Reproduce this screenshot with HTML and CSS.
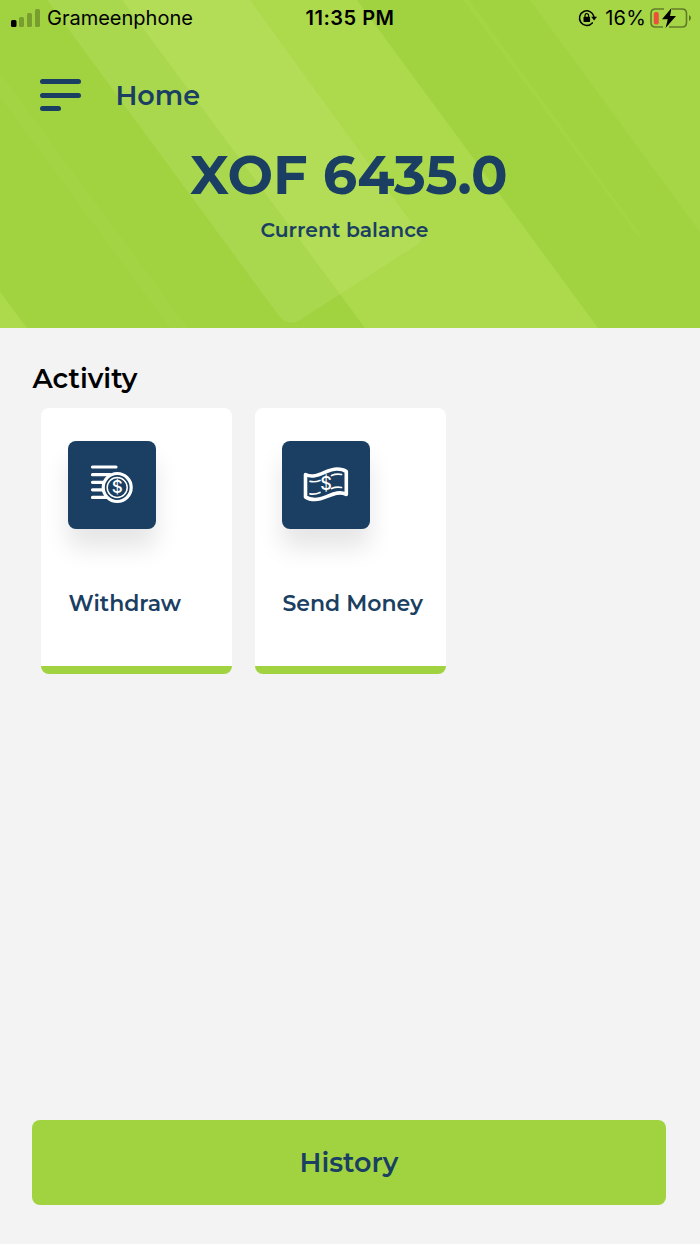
FILE: index.html
```html
<!DOCTYPE html>
<html lang="en">
<head>
    <meta charset="UTF-8">
    <meta name="viewport" content="width=device-width, initial-scale=1.0">
    <title>Home</title>
    <link rel="stylesheet" href="styles.css">
</head>
<body>
    <!-- Header -->
    <header class="header">
        <svg class="header-bg" viewBox="0 0 700 328" preserveAspectRatio="none">
            <path fill="#add94c" d="M122 0H357L598 328H365Z"/>
            <path fill="#add94c" d="M0 292L27 328H0Z"/>
            <path fill="#a6d646" d="M530 0H700V232Z"/>
            <path fill="#a3d443" d="M0 73L188 328H170L0 97Z"/>
            <path fill="#a4d544" d="M463 0H469L641 235L639 237Z"/>
            <path fill="#d8ef9c" fill-opacity=".15" d="M47 0H250L419 233Q424 240 417 245L300 320Q288 327 279 316Z"/>
        </svg>

        <!-- Status Bar -->
        <div class="status-bar">
            <div class="status-left">
                <svg width="30" height="20" viewBox="0 0 30 20">
                    <rect x="0" y="12" width="5.5" height="7" rx="1.5"/>
                    <g fill-opacity=".25">
                        <rect x="8" y="9" width="5" height="10" rx="1.5"/>
                        <rect x="16" y="5" width="5" height="14" rx="1.5"/>
                        <rect x="24" y="1" width="5" height="18" rx="1.5"/>
                    </g>
                </svg>
                <span class="carrier">Grameenphone</span>
            </div>
            <div class="time">11:35 PM</div>
            <div class="status-right">
                <svg class="lock-icon" width="20" height="18" viewBox="0 0 20 18">
                    <path d="M14.300 13.900A7.300 7.300 0 1 1 15.900 7.500" fill="none" stroke="#000" stroke-width="1.500" stroke-linecap="round"/>
                    <path d="M13.200 7.700H19L16.100 11.600Z"/>
                    <rect x="5.500" y="7.800" width="6.600" height="5.200" rx=".8"/>
                    <path d="M7 8.300V6.400a1.800 1.800 0 0 1 3.600 0V8.300" fill="none" stroke="#000" stroke-width="1.200"/>
                </svg>
                <span class="percent">16%</span>
                <svg class="battery" width="42" height="22" viewBox="0 0 42 22">
                    <path d="M14 2H5.500Q1 2 1 6.500V15.500Q1 20 5.500 20H13M22 2H32Q36.500 2 36.500 6.500V15.500Q36.500 20 32 20H19" fill="none" stroke="#000" stroke-opacity=".42" stroke-width="1.600"/>
                    <path d="M39 8Q41 9 41 11T39 14Z" fill-opacity=".45"/>
                    <rect x="3.800" y="5" width="5" height="12.500" rx="2" fill="#ee4f3b"/>
                    <path d="M21.500 1L12 12.300H17.800L15.500 21L26 9H20Z"/>
                </svg>
            </div>
        </div>

        <!-- Nav -->
        <div class="nav">
            <div class="menu-btn">
                <span></span>
                <span></span>
                <span class="short"></span>
            </div>
            <div class="nav-title">Home</div>
        </div>

        <div class="balance">XOF 6435.0</div>
        <div class="balance-label">Current balance</div>
    </header>

    <!-- Activity -->
    <main class="content">
        <h2 class="section-title">Activity</h2>
        <div class="cards">
            <div class="card">
                <div class="card-icon">
                    <svg width="88" height="88" viewBox="0 0 88 88" fill="none" stroke="#fff" stroke-linecap="round">
                        <path stroke-width="3.200" d="M24.500 26H48M24.500 33.700H42M24.500 41.300H36M24.500 48.800H35M24.500 56.400H40"/>
                        <circle cx="49.200" cy="46.500" r="14" fill="#1a3f62" stroke-width="3.200"/>
                        <circle cx="49.200" cy="46.500" r="10" stroke-width="1.500"/>
                        <text class="coin-sign" x="49.200" y="52.400">$</text>
                    </svg>
                </div>
                <div class="card-label">Withdraw</div>
            </div>
            <div class="card">
                <div class="card-icon">
                    <svg width="88" height="88" viewBox="0 0 88 88" fill="none" stroke="#fff" stroke-linecap="round" stroke-linejoin="round">
                        <path stroke-width="3.600" d="M23.500 33.500C34 39 44 28 55 28Q61 28 64.300 30.500V53.500C54 48 44 58.500 33 58.500Q27 58.500 23.500 56Z"/>
                        <path stroke-width="1.700" d="M28 40.300Q33 41.500 38 39.500M28 52.800Q33 53.800 38 51.500M49.500 34.500Q54.500 32.500 59.500 33.500M49.500 47.500Q54.500 45.500 59.500 46.500"/>
                        <text class="bill-sign" x="44" y="49">$</text>
                    </svg>
                </div>
                <div class="card-label">Send Money</div>
            </div>
        </div>
    </main>

    <!-- History Button -->
    <footer class="footer">
        <button class="history-btn">History</button>
    </footer>
</body>
</html>
```
FILE: styles.css
```css
* {
    box-sizing: border-box;
}

body {
    margin: 0;
    height: 1244px;
    display: flex;
    flex-direction: column;
    background: #f3f3f3;
    color: #1a3f62;
    font-family: Montserrat, Inter, sans-serif;
    overflow: hidden;
}

/* Header */
.header {
    position: relative;
    height: 328px;
    background: #a1d341;
    text-align: center;
    white-space: nowrap;
}

.header-bg {
    position: absolute;
    top: 0;
    left: 0;
    width: 100%;
    height: 100%;
}

.header > div {
    position: relative;
}

/* Status Bar */
.status-bar {
    display: grid;
    grid-template-columns: 1fr auto 1fr;
    align-items: center;
    height: 36px;
    padding: 0 8px 0 11px;
    color: #000;
    font-family: Inter, sans-serif;
    font-size: 20px;
}

.status-left,
.status-right {
    display: flex;
    align-items: center;
}

.status-left {
    gap: 6px;
}

.status-right {
    justify-content: flex-end;
}

.time {
    padding-right: 3px;
    font-weight: 600;
    letter-spacing: 0.5px;
}

.percent {
    margin: 0 4px 0 7px;
    letter-spacing: 0.2px;
}

/* Nav */
.nav {
    display: flex;
    align-items: center;
    gap: 34.5px;
    height: 40px;
    margin-top: 39px;
    padding-left: 40px;
}

.menu-btn {
    display: flex;
    flex-direction: column;
    gap: 8.5px;
    width: 41px;
}

.menu-btn span {
    height: 5px;
    border-radius: 3px;
    background: #1a3f62;
}

.menu-btn .short {
    width: 21px;
}

.nav-title {
    font-size: 27px;
    font-weight: 600;
}

/* Balance */
.balance {
    margin-top: 27px;
    padding-right: 2px;
    line-height: 66px;
    font-size: 54px;
    font-weight: 700;
}

.balance-label {
    margin-top: 9px;
    padding-right: 11px;
    line-height: 26px;
    font-size: 20.3px;
    font-weight: 600;
}

/* Activity */
.content {
    flex: 1;
    padding: 34px 32px 0;
}

.section-title {
    margin: 0;
    padding-left: 0.5px;
    line-height: 34px;
    color: #000;
    font-size: 27px;
    font-weight: 600;
}

.cards {
    display: flex;
    gap: 23px;
    padding: 12px 9px 0;
}

.card {
    width: 191px;
    height: 266px;
    padding: 33px 0 0 27px;
    background: linear-gradient(#a1d341, #a1d341) bottom / 100% 8px no-repeat #fff;
    border-radius: 8px;
    overflow: hidden;
    white-space: nowrap;
}

.card-icon {
    width: 88px;
    height: 88px;
    border-radius: 8px;
    background: #1a3f62;
    box-shadow: 0 19px 24px rgba(0, 0, 0, 0.1);
}

.card-icon svg {
    display: block;
}

.card-icon text {
    fill: #fff;
    stroke: none;
    text-anchor: middle;
    font-family: Inter, sans-serif;
    font-weight: 500;
}

.coin-sign {
    font-size: 17px;
}

.bill-sign {
    font-size: 18px;
}

.card-label {
    margin-top: 61px;
    padding-left: 0.5px;
    line-height: 28px;
    font-size: 22px;
    font-weight: 600;
}

/* History Button */
.footer {
    padding: 0 34px 39px 32px;
}

.history-btn {
    display: block;
    width: 100%;
    height: 85px;
    border: none;
    border-radius: 8px;
    background: #a1d341;
    color: #1a3f62;
    font-family: inherit;
    font-size: 27px;
    font-weight: 600;
}
```
